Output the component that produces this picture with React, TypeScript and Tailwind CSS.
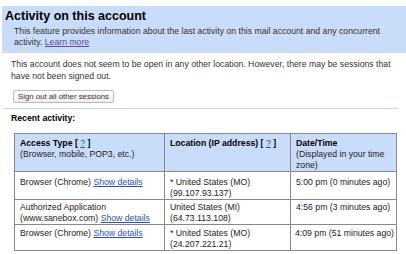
export default function App() {
  return (
    <div className="w-[406px] h-[254px] overflow-hidden bg-white text-[8.7px] leading-[11px] text-[#222] font-['Liberation_Sans',Arial,sans-serif]">
      <div className="pt-[6px] pl-[2px]">
        <div className="bg-[#c9dcfa] h-[47px] pl-[3px] pt-[3px]">
          <h2 className="text-[12.5px] leading-[15px] font-bold text-black">Activity on this account</h2>
          <p className="pl-[9px] pt-[2px] leading-[11px] text-[#333]">
            This feature provides information about the last activity on this mail account and any concurrent activity.{' '}
            <a className="underline text-[#5b4aa8]">Learn more</a>
          </p>
        </div>
      </div>

      <p className="pl-[11px] pr-[12px] pt-[5px] leading-[12px] text-[#333]">
        This account does not seem to be open in any other location. However, there may be sessions that have not been signed out.
      </p>

      <div className="pl-[13px] pt-[8px]">
        <button className="h-[13px] px-[4px] border border-[#bbb] rounded-[2px] bg-gradient-to-b from-white to-[#eee] text-[7.8px] leading-[11px] text-[#333]">
          Sign out all other sessions
        </button>
      </div>

      <div className="mx-[3px] mt-[5px] w-[395px] h-px bg-[#c9d7ea]" />

      <div className="pl-[11px] pt-[4px] font-bold text-black">Recent activity:</div>

      <table className="ml-[14px] mt-[9px] w-[382px] border-collapse border border-[#888] table-fixed">
        <colgroup>
          <col className="w-[150px]" />
          <col className="w-[126px]" />
          <col className="w-[106px]" />
        </colgroup>
        <thead>
          <tr className="bg-[#c9dcfa] h-[37px] align-top">
            <th className="border border-[#888] text-left font-normal pl-[5px] pr-[2px] pt-[4px]">
              <span className="font-bold text-black">Access Type [ <a className="underline text-[#2a4fb3] font-normal">?</a> ]</span>
              <br />(Browser, mobile, POP3, etc.)
            </th>
            <th className="border border-[#888] text-left font-normal pl-[5px] pr-[2px] pt-[4px]">
              <span className="font-bold text-black">Location (IP address) [ <a className="underline text-[#2a4fb3] font-normal">?</a> ]</span>
            </th>
            <th className="border border-[#888] text-left font-normal pl-[5px] pr-[8px] pt-[4px]">
              <span className="font-bold text-black">Date/Time</span>
              <br />(Displayed in your time zone)
            </th>
          </tr>
        </thead>
        <tbody>
          <tr className="h-[27px] align-top">
            <td className="border border-[#888] pl-[5px] pr-[2px] pt-[5px]">
              Browser (Chrome) <a className="underline text-[#2a4fb3]">Show details</a>
            </td>
            <td className="border border-[#888] pl-[5px] pr-[2px] pt-[5px]">
              * United States (MO)<br />(99.107.93.137)
            </td>
            <td className="border border-[#888] pl-[5px] pr-[1px] pt-[5px] whitespace-nowrap">5:00 pm (0 minutes ago)</td>
          </tr>
          <tr className="h-[25px] align-top">
            <td className="border border-[#888] pl-[5px] pr-[2px] pt-[2px]">
              Authorized Application<br />(www.sanebox.com) <a className="underline text-[#2a4fb3]">Show details</a>
            </td>
            <td className="border border-[#888] pl-[5px] pr-[2px] pt-[2px]">
              United States (MI)<br />(64.73.113.108)
            </td>
            <td className="border border-[#888] pl-[5px] pr-[1px] pt-[2px] whitespace-nowrap">4:56 pm (3 minutes ago)</td>
          </tr>
          <tr className="h-[26px] align-top">
            <td className="border border-[#888] pl-[5px] pr-[2px] pt-[3px]">
              Browser (Chrome) <a className="underline text-[#2a4fb3]">Show details</a>
            </td>
            <td className="border border-[#888] pl-[5px] pr-[2px] pt-[3px]">
              * United States (MO)<br />(24.207.221.21)
            </td>
            <td className="border border-[#888] pl-[4px] pr-0 pt-[3px] whitespace-nowrap">4:09 pm (51 minutes ago)</td>
          </tr>
        </tbody>
      </table>
    </div>
  )
}
